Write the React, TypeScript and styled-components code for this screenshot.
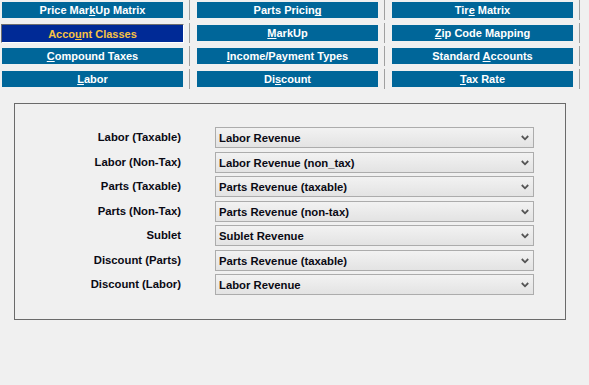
import React from "react";
import styled, { createGlobalStyle } from "styled-components";

const Global = createGlobalStyle`
  html, body { margin: 0; padding: 0; background: #f0f0f0; }
  body { font-family: "Liberation Sans", Arial, sans-serif; }
`;

const Page = styled.div`
  width: 589px;
  height: 385px;
  background: #f0f0f0;
  overflow: hidden;
`;

const Nav = styled.div`
  display: grid;
  grid-template-columns: repeat(3, 195px);
  grid-auto-rows: 23px;
`;

const Cell = styled.div`
  position: relative;
  display: flex;
  align-items: flex-start;
  padding: 2px 0 0 2px;
  &::after {
    content: "";
    position: absolute;
    left: 189px;
    top: 0;
    width: 1px;
    height: 20px;
    background: #a0a0a0;
  }
`;

const NavButton = styled.div<{ $active?: boolean }>`
  box-sizing: border-box;
  width: 181px;
  height: 16px;
  display: flex;
  align-items: center;
  justify-content: center;
  font: bold 11px "Liberation Sans", Arial, sans-serif;
  color: ${(p) => (p.$active ? "#f7c243" : "#ffffff")};
  background: ${(p) => (p.$active ? "#002a96" : "#006699")};
  white-space: pre;
  ${(p) =>
    p.$active &&
    `
    width: 183px;
    height: 19px;
    margin: -1px 0 0 -1px;
    border-top: 1px solid #6e6e6e;
    border-left: 1px solid #6e6e6e;
    border-right: 1px solid #ffffff;
    border-bottom: 1px solid #ffffff;
  `}
  u {
    text-decoration: underline;
    text-decoration-skip-ink: none;
    text-underline-offset: 1px;
  }
`;

const Panel = styled.div`
  box-sizing: border-box;
  margin: 11px 0 0 14px;
  width: 552px;
  height: 217px;
  border: 1px solid #6a6a6a;
  padding: 23px 31px 0 0;
  display: grid;
  grid-template-columns: 166px 319px;
  column-gap: 34px;
  row-gap: 3.5px;
  grid-auto-rows: 21px;
  align-content: start;
`;

const Label = styled.div`
  font: bold 11.3px "Liberation Sans", Arial, sans-serif;
  color: #0a0a14;
  text-align: right;
  line-height: 20px;
  white-space: nowrap;
`;

const Dropdown = styled.div`
  box-sizing: border-box;
  height: 21px;
  border: 1px solid #acacac;
  background: linear-gradient(#f2f2f2, #e3e3e3);
  display: flex;
  align-items: center;
  justify-content: space-between;
  padding: 1px 4px 0 3px;
  font: bold 11.3px "Liberation Sans", Arial, sans-serif;
  color: #0a0a14;
  white-space: nowrap;
`;

const Chevron = () => (
  <svg width="8" height="6" viewBox="0 0 8 6" style={{ display: "block" }}>
    <path d="M0.8 1 L4 4.3 L7.2 1" fill="none" stroke="#555" strokeWidth="1.8" />
  </svg>
);

const navItems: React.ReactNode[][] = [
  [
    <>Price Mar<u>k</u>Up Matrix</>,
    <>Parts Pricin<u>g</u></>,
    <>Tir<u>e</u> Matrix</>,
  ],
  [
    <>Acco<u>u</u>nt Classes</>,
    <><u>M</u>arkUp</>,
    <><u>Z</u>ip Code Mapping</>,
  ],
  [
    <><u>C</u>ompound Taxes</>,
    <><u>I</u>ncome/Payment Types</>,
    <>Standard <u>A</u>ccounts</>,
  ],
  [
    <><u>L</u>abor</>,
    <>Di<u>s</u>count</>,
    <><u>T</u>ax Rate</>,
  ],
];

const rows: [string, string][] = [
  ["Labor (Taxable)", "Labor Revenue"],
  ["Labor (Non-Tax)", "Labor Revenue (non_tax)"],
  ["Parts (Taxable)", "Parts Revenue (taxable)"],
  ["Parts (Non-Tax)", "Parts Revenue (non-tax)"],
  ["Sublet", "Sublet Revenue"],
  ["Discount (Parts)", "Parts Revenue (taxable)"],
  ["Discount (Labor)", "Labor Revenue"],
];

export default function App() {
  return (
    <Page>
      <Global />
      <Nav>
        {navItems.map((row, r) =>
          row.map((item, c) => (
            <Cell key={`${r}-${c}`}>
              <NavButton $active={r === 1 && c === 0}>
                <span>{item}</span>
              </NavButton>
            </Cell>
          ))
        )}
      </Nav>
      <Panel>
        {rows.map(([label, value]) => (
          <React.Fragment key={label}>
            <Label>{label}</Label>
            <Dropdown>
              <span>{value}</span>
              <Chevron />
            </Dropdown>
          </React.Fragment>
        ))}
      </Panel>
    </Page>
  );
}
